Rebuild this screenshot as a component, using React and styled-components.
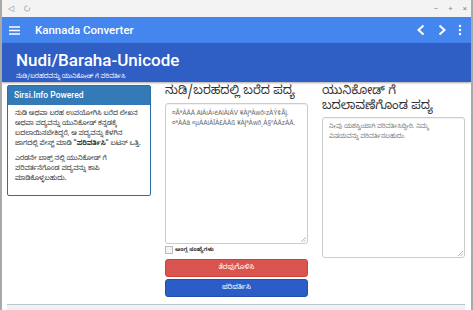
import React from "react";
import styled, { createGlobalStyle } from "styled-components";

const GlobalStyle = createGlobalStyle`
  html, body { margin: 0; padding: 0; background: #fff; }
  body { font-family: Roboto, "Noto Sans Kannada", "Noto Sans", sans-serif; overflow: hidden; }
`;

const KN = `"Noto Sans Kannada", "Lohit Kannada", "Noto Sans", Roboto, sans-serif`;

const Window = styled.div`
  width: 473px;
  height: 310px;
  box-sizing: border-box;
  border-left: 2px solid #a9a9a9;
  border-right: 2px solid #a9a9a9;
  display: flex;
  flex-direction: column;
  overflow: hidden;
`;

const TitleBar = styled.div`
  height: 17px;
  background: #f3f3f3;
  display: flex;
  align-items: center;
  justify-content: space-between;
  padding: 0 4px 0 6px;
  color: #8a8a8a;
  font-size: 8px;
`;

const TitleGroup = styled.div`
  display: flex;
  gap: 10px;
  align-items: center;
`;

const Toolbar = styled.div`
  height: 26px;
  background: #4486ee;
  display: flex;
  align-items: center;
  padding: 0 9px 0 7px;
  color: #fff;
`;

const AppTitle = styled.div`
  font-family: Roboto, sans-serif;
  font-weight: 500;
  font-size: 11.5px;
  margin-left: 15px;
  flex: 1;
`;

const ToolIcons = styled.div`
  display: flex;
  align-items: center;
  gap: 11px;
`;

const Header = styled.div`
  height: 39px;
  background: #2f5ec4;
  padding: 8px 14px 0;
  box-sizing: border-box;
  color: #fff;
  box-shadow: 0 1px 2px rgba(0,0,0,0.35);
  position: relative;
`;

const HeaderTitle = styled.div`
  font-family: Roboto, sans-serif;
  font-weight: 500;
  font-size: 17px;
  line-height: 18px;
`;

const HeaderSub = styled.div`
  font-family: ${KN};
  font-size: 6px;
  line-height: 10px;
  margin-top: 3px;
`;

const Content = styled.div`
  flex: 1;
  display: grid;
  grid-template-columns: 144px 143px 143px;
  column-gap: 14px;
  padding: 3px 0 0 5px;
`;

const Panel = styled.div`
  border: 1px solid #2e6da4;
  border-radius: 2px;
  align-self: start;
  background: #fff;
`;

const PanelHead = styled.div`
  background: #337ab7;
  color: #fff;
  font-family: Roboto, sans-serif;
  font-weight: 500;
  font-size: 8.5px;
  padding: 4px 6px;
  height: 19px;
  box-sizing: border-box;
`;

const PanelBody = styled.div`
  padding: 5px 9px 10px 7px;
  font-family: ${KN};
  font-size: 6.5px;
  line-height: 10px;
  color: #333;
  p { margin: 0 0 5px; }
  p:last-child { margin: 0; }
  b { font-weight: 700; }
`;

const Column = styled.div`
  display: flex;
  flex-direction: column;
`;

const ColHeading = styled.div`
  font-family: ${KN};
  font-size: 12px;
  line-height: 14.5px;
  color: #333;
  margin: 0 0 3px;
`;

const Area = styled.div`
  height: ${(p) => p.$h}px;
  border: 1px solid #ccc;
  border-radius: 3px;
  box-sizing: border-box;
  padding: 4px 6px;
  font-family: ${(p) => (p.$latin ? `"Liberation Sans", Arial, sans-serif` : KN)};
  font-size: ${(p) => (p.$latin ? 6.4 : 6)}px;
  line-height: 10px;
  color: ${(p) => (p.$latin ? "#666" : "#777")};
  box-shadow: inset 0 1px 1px rgba(0,0,0,0.06);
  position: relative;
  word-break: break-word;
`;

const Grip = styled.svg`
  position: absolute;
  right: 1px;
  bottom: 1px;
`;

const CheckRow = styled.label`
  display: flex;
  align-items: center;
  gap: 2px;
  margin-top: 2px;
  font-family: ${KN};
  font-size: 5.5px;
  font-weight: 700;
  color: #333;
  height: 9px;
`;

const Box = styled.span`
  width: 6px;
  height: 6px;
  border: 1px solid #bbb;
  background: #f3f3f3;
  display: inline-block;
`;

const Button = styled.div`
  height: 18px;
  margin-top: ${(p) => p.$mt}px;
  border-radius: 3px;
  background: ${(p) => p.$bg};
  border: 1px solid ${(p) => p.$bd};
  box-sizing: border-box;
  color: #fff;
  display: flex;
  align-items: center;
  justify-content: center;
  font-family: ${KN};
  font-size: 7px;
`;

const Footer = styled.div`
  height: 5px;
  margin: 2px 6px 0 5px;
  border-top: 1px solid #b9c6cf;
  background: #f1f1f1;
`;

const Chevron = ({ dir }) => (
  <svg width="10" height="12" viewBox="0 0 10 12">
    <path
      d={dir === "left" ? "M7.5 1.5 L2.5 6 L7.5 10.5" : "M2.5 1.5 L7.5 6 L2.5 10.5"}
      fill="none"
      stroke="#fff"
      strokeWidth="2"
    />
  </svg>
);

const Resize = () => (
  <Grip width="5" height="5" viewBox="0 0 5 5">
    <path d="M5 0 L0 5 M5 2.5 L2.5 5" stroke="#aaa" strokeWidth="0.8" />
  </Grip>
);

export default function App() {
  return (
    <>
      <GlobalStyle />
      <Window>
        <TitleBar>
          <TitleGroup>
            <span>◁</span>
            <svg width="7" height="7" viewBox="0 0 8 8">
              <path d="M6.5 3 A3 3 0 1 1 4 1" fill="none" stroke="#999" strokeWidth="0.9" />
            </svg>
          </TitleGroup>
          <TitleGroup>
            <span>−</span>
            <span>+</span>
            <span>×</span>
          </TitleGroup>
        </TitleBar>
        <Toolbar>
          <svg width="11" height="9" viewBox="0 0 11 9">
            <path d="M0 1 H11 M0 4.5 H11 M0 8 H11" stroke="#fff" strokeWidth="1.4" />
          </svg>
          <AppTitle>Kannada Converter</AppTitle>
          <ToolIcons>
            <Chevron dir="left" />
            <Chevron dir="right" />
            <svg width="4" height="12" viewBox="0 0 4 12">
              <circle cx="2" cy="2" r="1.2" fill="#fff" />
              <circle cx="2" cy="6" r="1.2" fill="#fff" />
              <circle cx="2" cy="10" r="1.2" fill="#fff" />
            </svg>
          </ToolIcons>
        </Toolbar>
        <Header>
          <HeaderTitle>Nudi/Baraha-Unicode</HeaderTitle>
          <HeaderSub>ನುಡಿ/ಬರಹದವನ್ನು ಯುನಿಕೋಡ್ ಗೆ ಪರಿವರ್ತಿಸಿ</HeaderSub>
        </Header>
        <Content>
          <Panel>
            <PanelHead>Sirsi.Info Powered</PanelHead>
            <PanelBody>
              <p>
                ನುಡಿ ಅಥವಾ ಬರಹ ಉಪಯೋಗಿಸಿ ಬರೆದ ಲೇಖನ ಅಥವಾ ಪದ್ಯವನ್ನು ಯುನಿಕೋಡ್ ಕನ್ನಡಕ್ಕೆ
                ಬದಲಾಯಿಸಬೇಕಿದ್ದರೆ, ಆ ಪದ್ಯವನ್ನು ಕೆಳಗಿನ ಜಾಗದಲ್ಲಿ ಪೇಸ್ಟ್ ಮಾಡಿ <b>"ಪರಿವರ್ತಿಸಿ"</b> ಬಟನ್ ಒತ್ತಿ.
              </p>
              <p>ಎರಡನೇ ಬಾಕ್ಸ್ ನಲ್ಲಿ ಯುನಿಕೋಡ್ ಗೆ ಪರಿವರ್ತನೆಗೊಂಡ ಪದ್ಯವನ್ನು ಕಾಪಿ ಮಾಡಿಕೊಳ್ಳಬಹುದು.</p>
            </PanelBody>
          </Panel>
          <Column>
            <ColHeading>ನುಡಿ/ಬರಹದಲ್ಲಿ ಬರೆದ ಪದ್ಯ</ColHeading>
            <Area $h={141} $latin>
              ¤ÃªÀÄÄ AiÀıÀ¹éAiÀiÁV ¥ÀjªÀwð¹zÀÝ¢Ãj. ¤ªÀÄä «µÀAiÀĪÀ£ÀÄß ¥ÀjªÀwð¸À§ºÀÄzÀÄ.
              <Resize />
            </Area>
            <CheckRow>
              <Box />
              ಆಂಗ್ಲ ಸಂಖ್ಯೆಗಳು
            </CheckRow>
            <Button $mt={4} $bg="#d9534f" $bd="#d43f3a">ತೆರವುಗೊಳಿಸಿ</Button>
            <Button $mt={2} $bg="#2c5cc5" $bd="#2650ae">ಪರಿವರ್ತಿಸಿ</Button>
          </Column>
          <Column>
            <ColHeading>ಯುನಿಕೋಡ್ ಗೆ ಬದಲಾವಣೆಗೊಂಡ ಪದ್ಯ</ColHeading>
            <Area $h={141}>
              ನೀವು ಯಶಸ್ವಿಯಾಗಿ ಪರಿವರ್ತಿಸಿದ್ದೀರಿ. ನಿಮ್ಮ ವಿಷಯವನ್ನು ಪರಿವರ್ತಿಸಬಹುದು.
              <Resize />
            </Area>
          </Column>
        </Content>
        <Footer />
      </Window>
    </>
  );
}
